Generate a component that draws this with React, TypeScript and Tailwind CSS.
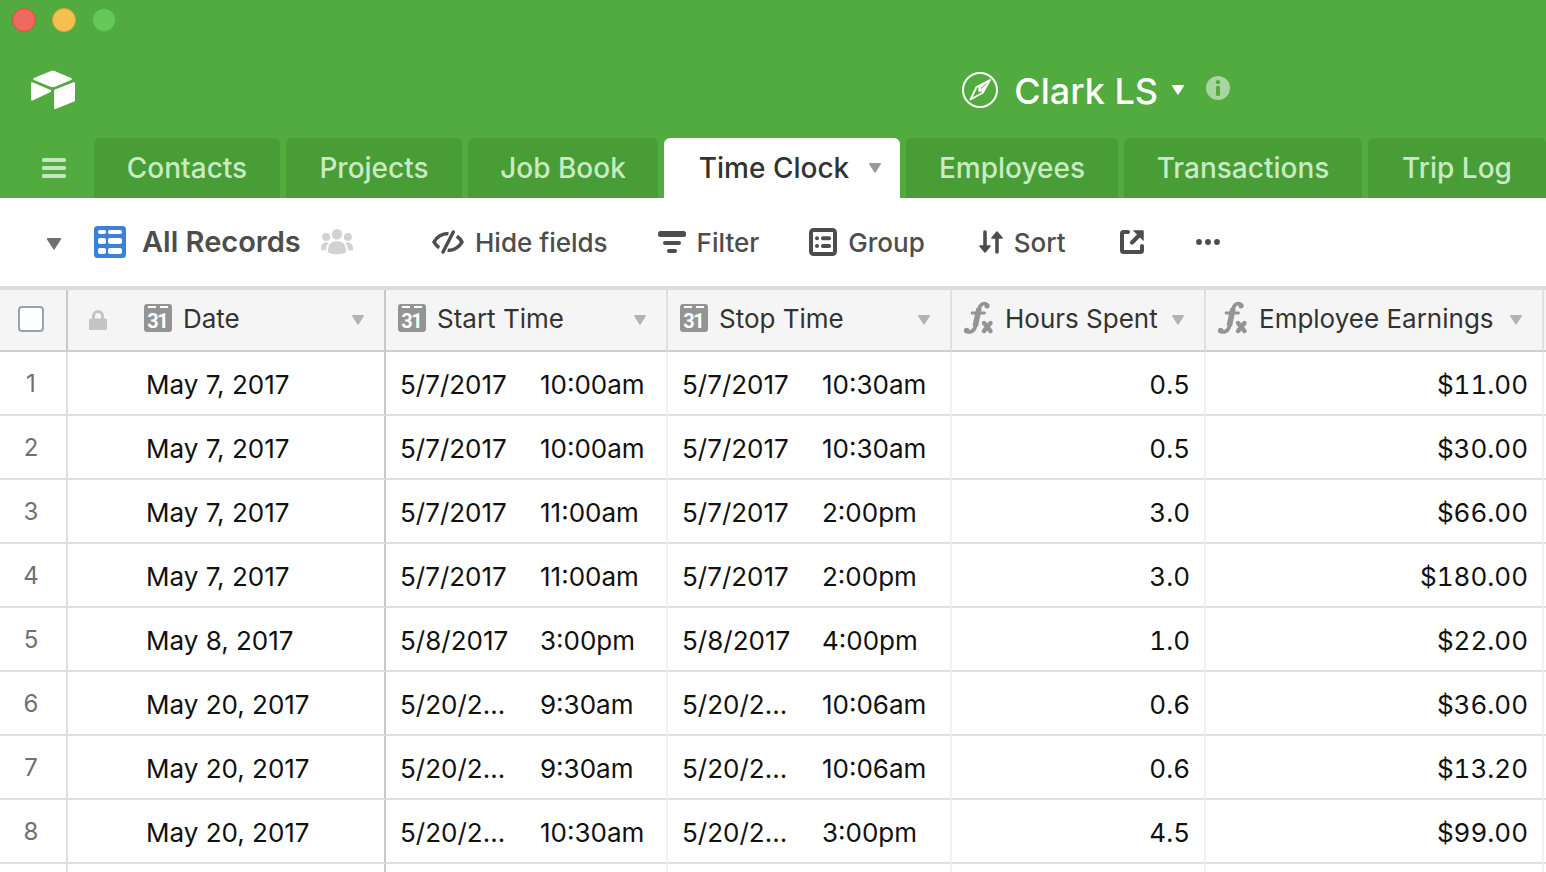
import type { ReactNode } from 'react'
import clsx from 'clsx'

const tabs = [
  { name: 'Contacts', width: 'w-[186px]' },
  { name: 'Projects', width: 'w-[176px]' },
  { name: 'Job Book', width: 'w-[190px]' },
  { name: 'Time Clock', width: 'w-[236px]', active: true },
  { name: 'Employees', width: 'w-[212px]' },
  { name: 'Transactions', width: 'w-[238px]' },
  { name: 'Trip Log', width: 'w-[178px]' },
]

type Stamp = [date: string, time: string]

type Entry = {
  date: string
  start: Stamp
  stop: Stamp
  hours: string
  earnings: string
}

const records: Entry[] = [
  { date: 'May 7, 2017', start: ['5/7/2017', '10:00am'], stop: ['5/7/2017', '10:30am'], hours: '0.5', earnings: '$11.00' },
  { date: 'May 7, 2017', start: ['5/7/2017', '10:00am'], stop: ['5/7/2017', '10:30am'], hours: '0.5', earnings: '$30.00' },
  { date: 'May 7, 2017', start: ['5/7/2017', '11:00am'], stop: ['5/7/2017', '2:00pm'], hours: '3.0', earnings: '$66.00' },
  { date: 'May 7, 2017', start: ['5/7/2017', '11:00am'], stop: ['5/7/2017', '2:00pm'], hours: '3.0', earnings: '$180.00' },
  { date: 'May 8, 2017', start: ['5/8/2017', '3:00pm'], stop: ['5/8/2017', '4:00pm'], hours: '1.0', earnings: '$22.00' },
  { date: 'May 20, 2017', start: ['5/20/2...', '9:30am'], stop: ['5/20/2...', '10:06am'], hours: '0.6', earnings: '$36.00' },
  { date: 'May 20, 2017', start: ['5/20/2...', '9:30am'], stop: ['5/20/2...', '10:06am'], hours: '0.6', earnings: '$13.20' },
  { date: 'May 20, 2017', start: ['5/20/2...', '10:30am'], stop: ['5/20/2...', '3:00pm'], hours: '4.5', earnings: '$99.00' },
]

function Caret({ className }: { className?: string }) {
  return (
    <svg viewBox="0 0 12 10" className={clsx('shrink-0', className)} fill="currentColor" aria-hidden="true">
      <path d="M.8 0h10.4c.7 0 1 .7.6 1.200L6.700 9.200c-.4.600-1 .600-1.400 0L.2 1.200C-.2.700.100 0 .8 0Z" />
    </svg>
  )
}

function Logo() {
  return (
    <svg viewBox="0 0 46 40" className="h-10 w-[46px]" fill="#fff" aria-hidden="true">
      <path d="M20.300 1.200 4 8c-1 .4-1 1.500 0 1.900l16.400 6.800c1.500.6 3.200.6 4.700 0l16-6.800c1-.4 1-1.500 0-1.900l-16-6.800c-1.500-.6-3.300-.6-4.800 0Z" />
      <path d="M1 13.300v16.200c0 .9.800 1.400 1.600 1l18-8.500c.9-.4.9-1.600 0-2L2.500 12.300c-.8-.3-1.500.2-1.500 1Z" />
      <path d="M45 13.300v17c0 .6-.3 1-.9 1.200l-18.500 7.400c-.8.300-1.500-.2-1.500-1V20.700c0-.5.3-1 .9-1.200l18.500-7.200c.8-.3 1.500.2 1.500 1Z" />
    </svg>
  )
}

function CompassIcon() {
  return (
    <svg viewBox="0 0 36 36" className="size-9" fill="none" stroke="#fff" aria-hidden="true">
      <circle cx="18" cy="18" r="17" strokeWidth="2" />
      <path d="M28 8 14.500 15 8.500 27.500 20.800 20.800Z" strokeWidth="1.800" strokeLinejoin="round" />
      <path d="M28 8 15 15l3 1.800ZM28 8l-7.500 12.500-1.700-3Z" fill="#fff" stroke="none" />
      <circle cx="18" cy="18" r="2" fill="#fff" stroke="none" />
    </svg>
  )
}

function InfoIcon() {
  return (
    <svg viewBox="0 0 24 24" className="size-6" aria-hidden="true">
      <circle cx="12" cy="12" r="12" fill="#a8d5a0" />
      <g fill="#52ab3e">
        <circle cx="12" cy="6.200" r="2.100" />
        <rect x="10" y="9.800" width="4" height="10.200" rx="1.600" />
      </g>
    </svg>
  )
}

function GridViewIcon() {
  return (
    <svg viewBox="0 0 32 32" className="size-8 shrink-0" aria-hidden="true">
      <rect width="32" height="32" rx="3.500" fill="#3b82d6" />
      <g fill="#fff">
        <rect x="4" y="4" width="8" height="4" rx="1.800" />
        <rect x="14" y="4" width="14" height="4" rx="1.800" />
        <rect x="4" y="12" width="8" height="6" rx="2" />
        <rect x="14" y="12" width="14" height="6" rx="2" />
        <rect x="4" y="22" width="8" height="6" rx="2" />
        <rect x="14" y="22" width="14" height="6" rx="2" />
      </g>
    </svg>
  )
}

function PeopleIcon() {
  return (
    <svg viewBox="0 0 32 26" className="ml-5 h-[26px] w-8 shrink-0" fill="#d2d2d2" aria-hidden="true">
      <circle cx="5.200" cy="8" r="4" />
      <circle cx="26.800" cy="8" r="4" />
      <path d="M0 20c0-4.500 1.700-6.800 5.500-6.800 1 0 1.700.2 2.300.5C6 15.500 5.200 17.500 5 21.300H1.200C.4 21.300 0 20.800 0 20ZM32 20c0-4.500-1.700-6.800-5.500-6.800-1 0-1.700.2-2.300.5 1.800 1.800 2.600 3.800 2.800 7.600h3.800c.8 0 1.200-.5 1.200-1.300Z" />
      <circle cx="16" cy="5.200" r="5.200" />
      <path d="M7 22.500c0-6.500 2.200-10.300 9-10.300s9 3.800 9 10.300c0 1.700-4 2.700-9 2.700s-9-1-9-2.700Z" />
    </svg>
  )
}

function HideIcon() {
  return (
    <svg viewBox="0 0 32 24" className="h-6 w-8 shrink-0" fill="none" stroke="currentColor" strokeWidth="3.600" strokeLinejoin="round" aria-hidden="true">
      <path d="M16.500 3.500C9.500 3.800 4.500 7.500 2 12c1.200 2.200 3 4.200 5.200 5.700" />
      <path d="M15.500 20.500c7-.3 12-4 14.500-8.500-1.200-2.200-3-4.200-5.200-5.700" />
      <path d="M21.300 2 11 22" stroke="#fff" strokeWidth="6" />
      <path d="M21.300 2 11 22" strokeWidth="3.400" strokeLinecap="round" />
    </svg>
  )
}

function FilterIcon() {
  return (
    <svg viewBox="0 0 28 22" className="h-[22px] w-7 shrink-0" fill="currentColor" aria-hidden="true">
      <rect width="28" height="6" rx="2.500" />
      <rect x="5" y="10" width="18" height="4" rx="2" />
      <rect x="9" y="18" width="10" height="4" rx="2" />
    </svg>
  )
}

function GroupIcon() {
  return (
    <svg viewBox="0 0 28 28" className="size-7 shrink-0" fill="currentColor" aria-hidden="true">
      <rect x="2" y="2" width="24" height="24" rx="2.500" fill="none" stroke="currentColor" strokeWidth="4" />
      <circle cx="8" cy="10.200" r="2" />
      <circle cx="8" cy="18" r="2" />
      <rect x="12" y="8.200" width="10" height="4" rx="1.800" />
      <rect x="12" y="16" width="10" height="4" rx="1.800" />
    </svg>
  )
}

function SortIcon() {
  return (
    <svg viewBox="0 0 24 24" className="size-6 shrink-0" fill="currentColor" stroke="currentColor" strokeLinejoin="round" strokeLinecap="round" aria-hidden="true">
      <path d="M6 2v16M18 22V6" strokeWidth="3.600" />
      <path d="M1 16h10l-5 6ZM13 8h10l-5-6Z" strokeWidth="1.600" />
    </svg>
  )
}

function ShareIcon() {
  return (
    <svg viewBox="0 0 24 24" className="size-6" fill="none" stroke="currentColor" strokeLinecap="round" strokeLinejoin="round" aria-hidden="true">
      <path d="M8 2H3.500C2.600 2 2 2.600 2 3.500v17c0 .9.600 1.500 1.500 1.500h17c.9 0 1.500-.6 1.500-1.500V16" strokeWidth="4" />
      <path d="M12 12.500 19 5.500" strokeWidth="4.200" />
      <path d="M14 .8h9.200V10Z" fill="currentColor" strokeWidth="1" />
    </svg>
  )
}

function MoreIcon() {
  return (
    <svg viewBox="0 0 24 6" className="h-1.5 w-6" fill="currentColor" aria-hidden="true">
      <circle cx="3" cy="3" r="2.900" />
      <circle cx="12" cy="3" r="2.900" />
      <circle cx="21" cy="3" r="2.900" />
    </svg>
  )
}

function LockIcon() {
  return (
    <svg viewBox="0 0 18 20" className="h-5 w-[18px] shrink-0" aria-hidden="true">
      <path d="M4.500 9V6a4.500 4.500 0 0 1 9 0v3" fill="none" stroke="#c4c4c4" strokeWidth="3" />
      <rect y="8.500" width="18" height="11.500" rx="1.500" fill="#c4c4c4" />
    </svg>
  )
}

function CalendarIcon() {
  return (
    <svg viewBox="0 0 28 28" className="size-7 shrink-0" aria-hidden="true">
      <rect width="28" height="28" rx="3" fill="#949494" />
      <path d="M4 3h8M16 3h8" stroke="#fff" strokeWidth="2" />
      <g className="font-[Roboto,sans-serif] text-[20px] font-bold" fill="#fff" textAnchor="middle">
        <text x="9" y="24">3</text>
        <text x="19" y="24">1</text>
      </g>
    </svg>
  )
}

function FormulaIcon() {
  return (
    <svg viewBox="0 0 30 34" className="h-[34px] w-[30px] shrink-0" fill="none" stroke="#949494" strokeLinecap="round" aria-hidden="true">
      <path d="M23.500 4C20.500 1 16 2.500 14.800 9L11.500 25c-1.200 5-5.500 7.500-10 5" strokeWidth="3.600" />
      <path d="M15 7.500 11.300 25" strokeWidth="5.600" strokeLinecap="butt" />
      <path d="M8 12H20.500" strokeWidth="2.800" />
      <circle cx="23" cy="4.800" r="2.600" fill="#949494" stroke="none" />
      <circle cx="2.700" cy="29.500" r="2.700" fill="#949494" stroke="none" />
      <path d="m20 22 6.500 8M26.500 22 20 30" strokeWidth="4.400" />
    </svg>
  )
}

function ToolButton({ icon, children, className }: { icon: ReactNode; children: ReactNode; className?: string }) {
  return (
    <button type="button" className={clsx('flex shrink-0 items-center gap-[11px]', className)}>
      {icon}
      <span>{children}</span>
    </button>
  )
}

function HeaderCell({ icon, label, first }: { icon: ReactNode; label: string; first?: boolean }) {
  return (
    <th
      scope="col"
      className={clsx(
        'h-[62px] border-r-2 border-b-2 border-b-[#cfcfcf] bg-[#f5f5f5] p-0 font-normal',
        first ? 'border-r-[#c9c9c9]' : 'border-r-[#dde1e3]',
      )}
    >
      <div className={clsx('flex items-center pr-5', first ? 'pl-[21px]' : 'pl-3')}>
        {first && <LockIcon />}
        <span className={clsx('flex items-center gap-[11px] pb-1 whitespace-nowrap', first && 'ml-[37px]')}>
          {icon}
          {label}
        </span>
        <button type="button" aria-label={`${label} options`} className="ml-auto text-[#b3b3b3]">
          <Caret className="h-2.5 w-3" />
        </button>
      </div>
    </th>
  )
}

function StampCell({ stamp: [date, time] }: { stamp: Stamp }) {
  return (
    <td className="border-r-2 border-b-2 border-r-[#f0f2f3] border-b-[#dde1e3] p-0 pt-0.5">
      <div className="flex pl-3.5 whitespace-nowrap">
        <span className="w-[140px]">{date}</span>
        <span>{time}</span>
      </div>
    </td>
  )
}

function NumberCell({ children }: { children: ReactNode }) {
  return (
    <td className="border-r-2 border-b-2 border-r-[#f0f2f3] border-b-[#dde1e3] p-0 pt-0.5 pr-3.5 text-right tabular-nums">
      {children}
    </td>
  )
}

export default function App() {
  return (
    <div className="flex h-screen flex-col overflow-hidden bg-white font-[Inter,sans-serif]">
      <header className="shrink-0 bg-[#52ab3e]">
        <div className="flex h-10 items-center gap-4 px-3">
          <button type="button" aria-label="Close" className="size-6 rounded-full border border-[#d9503f] bg-[#ee6a5f]" />
          <button type="button" aria-label="Minimize" className="size-6 rounded-full border border-[#dda33a] bg-[#f5c04f]" />
          <button type="button" aria-label="Zoom" className="size-6 rounded-full border border-[#4fb045] bg-[#65c958]" />
        </div>

        <div className="flex h-[98px] items-center justify-between pt-0.5 pr-[316px] pl-[30px]">
          <a href="#home" aria-label="Home">
            <Logo />
          </a>
          <div className="flex items-center text-white">
            <CompassIcon />
            <h1 className="ml-4 pt-0.5 text-4xl font-medium">Clark LS</h1>
            <button type="button" aria-label="Base menu" className="ml-3.5">
              <Caret className="h-2.5 w-3" />
            </button>
            <button type="button" aria-label="Base info" className="ml-[22px] pb-1">
              <InfoIcon />
            </button>
          </div>
        </div>

        <nav className="flex h-[60px] gap-1.5 overflow-hidden">
          <button type="button" aria-label="Menu" className="flex w-[88px] shrink-0 items-center pl-[42px]">
            <svg viewBox="0 0 24 20" className="h-5 w-6" fill="#c5e6be" aria-hidden="true">
              <rect width="24" height="4" rx="1.500" />
              <rect y="8" width="24" height="4" rx="1.500" />
              <rect y="16" width="24" height="4" rx="1.500" />
            </svg>
          </button>
          {tabs.map((tab) => (
            <button
              key={tab.name}
              type="button"
              className={clsx(
                'flex shrink-0 items-center justify-center rounded-t-md text-[28px] font-medium whitespace-nowrap',
                tab.width,
                tab.active ? 'gap-5 bg-white pl-4 text-[#333]' : 'bg-[#489d36] text-[#c8ebc3]',
              )}
            >
              {tab.name}
              {tab.active && <Caret className="h-2.5 w-3 text-[#999]" />}
            </button>
          ))}
        </nav>
      </header>

      <div className="flex h-[88px] shrink-0 items-center pl-[46px] text-[26px] font-medium whitespace-nowrap text-[#4d4d4d]">
        <button type="button" aria-label="Toggle views" className="shrink-0 pt-1 text-[#707070]">
          <Caret className="h-3 w-4" />
        </button>
        <button type="button" className="ml-8 flex w-[258px] shrink-0 items-center">
          <GridViewIcon />
          <span className="ml-4 text-[29px] font-semibold">All Records</span>
          <PeopleIcon />
        </button>
        <ToolButton icon={<HideIcon />} className="ml-20">Hide fields</ToolButton>
        <ToolButton icon={<FilterIcon />} className="ml-[50px]">Filter</ToolButton>
        <ToolButton icon={<GroupIcon />} className="ml-[50px]">Group</ToolButton>
        <ToolButton icon={<SortIcon />} className="ml-[54px]">Sort</ToolButton>
        <button type="button" aria-label="Share view" className="ml-[54px]">
          <ShareIcon />
        </button>
        <button type="button" aria-label="More" className="ml-[52px]">
          <MoreIcon />
        </button>
      </div>

      <main className="min-h-0 flex-1 overflow-hidden border-t-4 border-[#dcdcdc]">
        <table className="w-full table-fixed border-separate border-spacing-0 text-left text-[26px] text-[#111]">
          <colgroup>
            <col className="w-[68px]" />
            <col className="w-[318px]" />
            <col className="w-[282px]" />
            <col className="w-[284px]" />
            <col className="w-[254px]" />
            <col className="w-[338px]" />
            <col />
          </colgroup>
          <thead className="text-[#333]">
            <tr>
              <th className="h-[62px] border-r-2 border-b-2 border-r-[#c9c9c9] border-b-[#cfcfcf] bg-[#f5f5f5] p-0 pb-0.5 pl-[18px]">
                <input
                  type="checkbox"
                  aria-label="Select all records"
                  className="block size-[26px] appearance-none rounded border-2 border-[#9aa3ad] bg-white"
                />
              </th>
              <HeaderCell icon={<CalendarIcon />} label="Date" first />
              <HeaderCell icon={<CalendarIcon />} label="Start Time" />
              <HeaderCell icon={<CalendarIcon />} label="Stop Time" />
              <HeaderCell icon={<FormulaIcon />} label="Hours Spent" />
              <HeaderCell icon={<FormulaIcon />} label="Employee Earnings" />
              <td className="border-b-2 border-[#cfcfcf] bg-[#f5f5f5] p-0" />
            </tr>
          </thead>
          <tbody>
            {records.map((record, i) => (
              <tr key={i} className="h-16">
                <td className="border-r-2 border-b-2 border-[#dde1e3] p-0 pt-0.5 pr-1 text-center text-2xl text-[#707070]">{i + 1}</td>
                <td className="border-r-2 border-b-2 border-r-[#c9c9c9] border-b-[#dde1e3] p-0 pt-0.5 pl-[78px]">{record.date}</td>
                <StampCell stamp={record.start} />
                <StampCell stamp={record.stop} />
                <NumberCell>{record.hours}</NumberCell>
                <NumberCell>{record.earnings}</NumberCell>
                <td className="border-b-2 border-[#dde1e3] p-0" />
              </tr>
            ))}
            <tr className="h-16">
              <td className="border-r-2 border-[#dde1e3]" />
              <td className="border-r-2 border-[#c9c9c9]" />
              <td className="border-r-2 border-[#f0f2f3]" />
              <td className="border-r-2 border-[#f0f2f3]" />
              <td className="border-r-2 border-[#f0f2f3]" />
              <td className="border-r-2 border-[#f0f2f3]" />
              <td />
            </tr>
          </tbody>
        </table>
      </main>
    </div>
  )
}
